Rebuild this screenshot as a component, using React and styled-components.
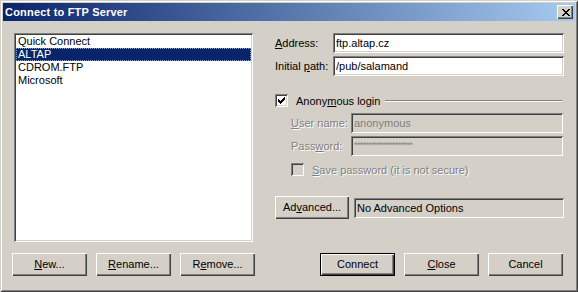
import React from "react";
import styled, { createGlobalStyle } from "styled-components";

const FACE = "#d4d0c8";

const GlobalStyle = createGlobalStyle`
  html, body {
    margin: 0;
    padding: 0;
    background: ${FACE};
  }
  body {
    font-family: "Liberation Sans", Arial, sans-serif;
    font-size: 11px;
    color: #000;
  }
`;

const CHECK = ["......X", ".....XX", "X...XXX", "XX.XXX.", "XXXXX..", ".XXX...", "..X...."];
const CROSS = ["XX....XX", ".XX..XX.", "..XXXX..", "...XX...", "..XXXX..", ".XX..XX.", "XX....XX"];

const PixelIcon = ({ rows, color }) => (
  <svg
    width={rows[0].length}
    height={rows.length}
    viewBox={`0 0 ${rows[0].length} ${rows.length}`}
    shapeRendering="crispEdges"
  >
    {rows.map((row, y) =>
      row.split("").map((c, x) =>
        c === "X" ? <rect key={`${x}-${y}`} x={x} y={y} width="1" height="1" fill={color} /> : null
      )
    )}
  </svg>
);

const items = ["Quick Connect", "ALTAP", "CDROM.FTP", "Microsoft"];

class App extends React.Component {
  state = { selected: 1 };

  render() {
    let { selected } = this.state;
    return (
      <>
        <GlobalStyle />
        <Window>
          <TitleBar>
            <Title>Connect to FTP Server</Title>
            <CloseBox>
              <PixelIcon rows={CROSS} color="#000" />
            </CloseBox>
          </TitleBar>
          <Body>
            <LeftCol>
              <ListBox>
                {items.map((item, i) => (
                  <ListItem
                    key={item}
                    $selected={i === selected}
                    onClick={() => this.setState({ selected: i })}
                  >
                    {item}
                  </ListItem>
                ))}
              </ListBox>
              <ButtonRow>
                <Button><u>N</u>ew...</Button>
                <Button><u>R</u>ename...</Button>
                <Button>R<u>e</u>move...</Button>
              </ButtonRow>
            </LeftCol>

            <RightCol>
              <FieldRow>
                <Label $width={58}><u>A</u>ddress:</Label>
                <Edit>ftp.altap.cz</Edit>
              </FieldRow>
              <FieldRow $gap={3}>
                <Label $width={58}>Initial <u>p</u>ath:</Label>
                <Edit>/pub/salamand</Edit>
              </FieldRow>

              <CheckRow $top={18}>
                <CheckBox>
                  <PixelIcon rows={CHECK} color="#000" />
                </CheckBox>
                <CheckText>Anony<u>m</u>ous login</CheckText>
                <Groove />
              </CheckRow>

              <FieldRow $gap={6} $indent={16}>
                <Label $width={60} $disabled><u>U</u>ser name:</Label>
                <Edit $disabled>anonymous</Edit>
              </FieldRow>
              <FieldRow $gap={3} $indent={16}>
                <Label $width={60} $disabled>Pass<u>w</u>ord:</Label>
                <Edit $disabled $stars>********************</Edit>
              </FieldRow>

              <CheckRow $top={7} $indent={16}>
                <CheckBox $disabled />
                <CheckText $disabled><u>S</u>ave password (it is not secure)</CheckText>
              </CheckRow>

              <AdvancedRow>
                <Button $width={74}>Ad<u>v</u>anced...</Button>
                <Edit $readonly>No Advanced Options</Edit>
              </AdvancedRow>

              <ButtonRow $right>
                <Button $default>Connect</Button>
                <Button><u>C</u>lose</Button>
                <Button>Cancel</Button>
              </ButtonRow>
            </RightCol>
          </Body>
        </Window>
      </>
    );
  }
}

const Window = styled.div`
  width: 578px;
  height: 292px;
  box-sizing: border-box;
  padding: 3px;
  background: ${FACE};
  box-shadow: inset 1px 1px ${FACE}, inset -1px -1px #404040, inset 2px 2px #fff,
    inset -2px -2px #808080;
  display: flex;
  flex-direction: column;
`;

const TitleBar = styled.div`
  height: 18px;
  flex: none;
  display: flex;
  align-items: center;
  padding: 0 2px;
  background: linear-gradient(to right, #0a246a, #a6caf0);
`;

const Title = styled.div`
  flex: 1;
  color: #fff;
  font-weight: bold;
  font-size: 11px;
  letter-spacing: 0.2px;
`;

const CloseBox = styled.div`
  width: 16px;
  height: 14px;
  box-sizing: border-box;
  display: flex;
  align-items: center;
  justify-content: center;
  padding-left: 1px;
  background: ${FACE};
  box-shadow: inset 1px 1px #fff, inset -1px -1px #404040, inset -2px -2px #808080;
`;

const Body = styled.div`
  flex: 1;
  display: flex;
  padding: 12px 11px 13px 9px;
`;

const LeftCol = styled.div`
  width: 243px;
  display: flex;
  flex-direction: column;
`;

const RightCol = styled.div`
  flex: 1;
  margin-left: 20px;
  display: flex;
  flex-direction: column;
`;

const ListBox = styled.div`
  margin: 0 2px;
  height: 209px;
  box-sizing: border-box;
  padding: 2px;
  background: #fff;
  box-shadow: inset 1px 1px #808080, inset -1px -1px #fff, inset 2px 2px #404040,
    inset -2px -2px ${FACE};
`;

const ListItem = styled.div`
  height: 13px;
  line-height: 13px;
  padding-left: 2px;
  white-space: nowrap;
  cursor: default;
  color: ${p => (p.$selected ? "#fff" : "#000")};
  background: ${p => (p.$selected ? "#0a246a" : "transparent")};
  outline: ${p => (p.$selected ? "1px dotted #8da2c9" : "none")};
  outline-offset: -1px;
`;

const ButtonRow = styled.div`
  margin-top: auto;
  display: flex;
  gap: 9px;
  justify-content: ${p => (p.$right ? "flex-end" : "flex-start")};
  padding-right: ${p => (p.$right ? "1px" : "0")};
`;

const Button = styled.button`
  width: ${p => p.$width || 75}px;
  height: 23px;
  flex: none;
  box-sizing: border-box;
  margin: 0;
  padding: 0 0 1px;
  font: inherit;
  color: #000;
  background: ${FACE};
  border: ${p => (p.$default ? "1px solid #000" : "none")};
  box-shadow: inset 1px 1px #fff, inset -1px -1px #404040, inset -2px -2px #808080;
  cursor: default;
`;

const FieldRow = styled.div`
  display: flex;
  align-items: center;
  margin-top: ${p => p.$gap || 0}px;
  padding-left: ${p => p.$indent || 0}px;
  padding-right: ${p => (p.$indent ? 1 : 0)}px;
`;

const Label = styled.div`
  width: ${p => p.$width}px;
  flex: none;
  white-space: nowrap;
  color: ${p => (p.$disabled ? "#808080" : "#000")};
  text-shadow: ${p => (p.$disabled ? "1px 1px #fff" : "none")};
`;

const Edit = styled.div`
  flex: 1;
  height: 20px;
  box-sizing: border-box;
  padding: 0 3px;
  display: flex;
  align-items: ${p => (p.$stars ? "flex-start" : "center")};
  padding-top: ${p => (p.$stars ? "4px" : "0")};
  white-space: nowrap;
  overflow: hidden;
  font-size: ${p => (p.$stars ? "9px" : "11px")};
  letter-spacing: ${p => (p.$stars ? "-0.6px" : "0")};
  color: ${p => (p.$disabled ? "#808080" : "#000")};
  background: ${p => (p.$disabled || p.$readonly ? FACE : "#fff")};
  box-shadow: inset 1px 1px #808080, inset -1px -1px #fff, inset 2px 2px #404040,
    inset -2px -2px ${FACE};
`;

const CheckRow = styled.div`
  display: flex;
  align-items: center;
  height: 13px;
  margin-top: ${p => p.$top}px;
  padding-left: ${p => p.$indent || 0}px;
`;

const CheckBox = styled.div`
  width: 13px;
  height: 13px;
  flex: none;
  box-sizing: border-box;
  display: flex;
  align-items: center;
  justify-content: center;
  background: ${p => (p.$disabled ? FACE : "#fff")};
  box-shadow: inset 1px 1px #808080, inset -1px -1px #fff, inset 2px 2px #404040,
    inset -2px -2px ${FACE};
`;

const CheckText = styled.div`
  margin-left: 8px;
  white-space: nowrap;
  color: ${p => (p.$disabled ? "#808080" : "#000")};
  text-shadow: ${p => (p.$disabled ? "1px 1px #fff" : "none")};
`;

const Groove = styled.div`
  flex: 1;
  height: 0;
  margin: 1px 2px 0 5px;
  border-top: 1px solid #808080;
  border-bottom: 1px solid #fff;
`;

const AdvancedRow = styled.div`
  display: flex;
  align-items: center;
  gap: 5px;
  margin-top: 20px;
`;

export default App;
